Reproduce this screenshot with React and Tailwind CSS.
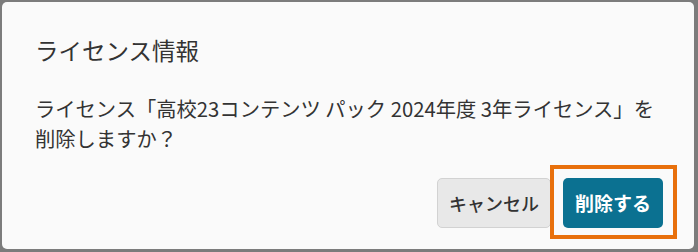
export default function App() {
    return (
        <div className="w-[698px] h-[252px] bg-[#7c7c7c] pt-[2px] pl-[2px] pr-[4px] pb-[3px]" style={{ fontFamily: '"Noto Sans CJK JP", "Noto Sans", sans-serif' }}>
            <div className="h-full rounded-[5px] bg-[#fafafa] pt-[32px] pl-[33px] pr-[31px] pb-[21px] flex flex-col">
                <h1 className="text-[23.5px] leading-[32px] text-[#333]">ライセンス情報</h1>
                <p className="mt-[27px] text-[20.3px] leading-[30px] text-[#333] whitespace-nowrap">
                    ライセンス「高校23コンテンツ パック 2024年度 3年ライセンス」を
                    <br />
                    削除しますか？
                </p>
                <div className="mt-auto flex justify-end gap-[12px]">
                    <button className="h-[50px] w-[114px] rounded-[5px] border border-[#d2d2d2] bg-[#e8e8e8] text-[18px] font-medium text-[#333]">
                        キャンセル
                    </button>
                    <div className="relative">
                        <button className="h-[50px] w-[100px] rounded-[5px] bg-[#0b7191] text-[19px] font-bold text-white">
                            削除する
                        </button>
                        <div className="absolute -left-[13px] -top-[13px] -right-[14px] -bottom-[11px] border-[4px] border-[#e8700c]" />
                    </div>
                </div>
            </div>
        </div>
    );
}
